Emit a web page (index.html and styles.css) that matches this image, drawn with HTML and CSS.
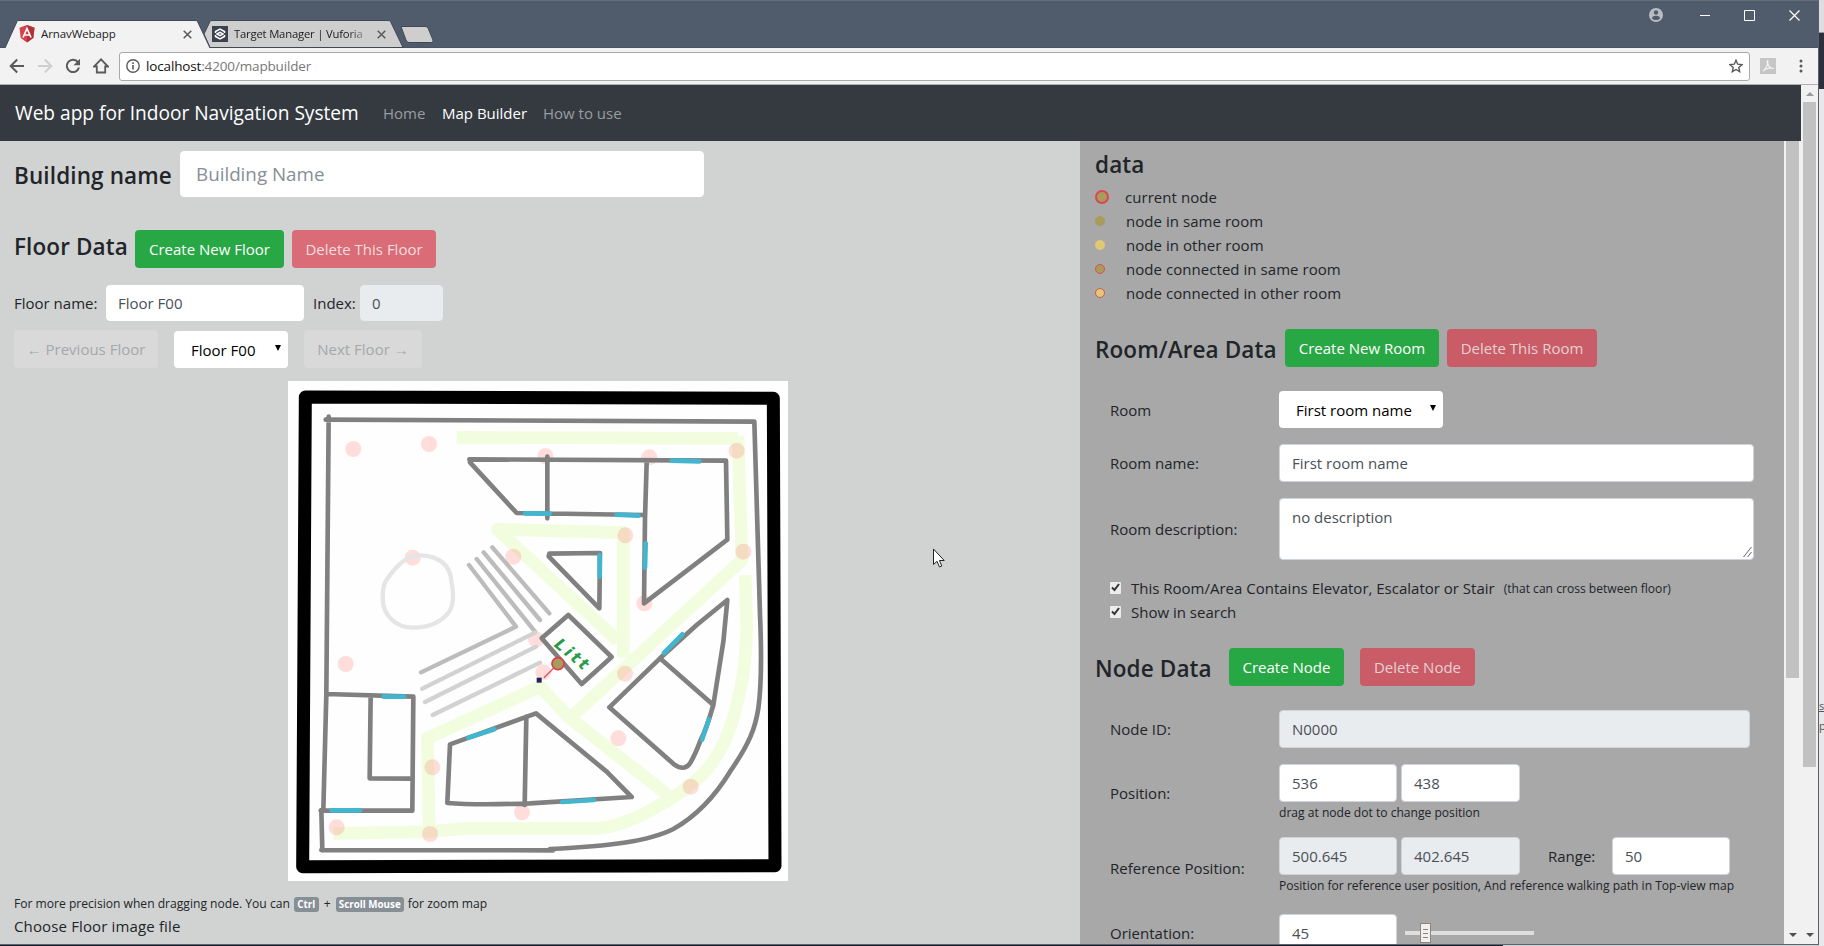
FILE: index.html
```html
<!DOCTYPE html>
<html lang="en">
<head>
<meta charset="utf-8">
<title>ArnavWebapp</title>
<link rel="stylesheet" href="styles.css">
</head>
<body>
<div class="desktop">
<div class="window">
  <div class="titlebar">
    <div class="tabs">
      <div class="tab tab-active">
        <svg class="tab-shape" width="206" height="28" viewBox="0 0 206 28"><path d="M0 28L12 1.500Q12.500 .5 14 .5H190Q192 .5 192.500 1.500L205 28" fill="#f2f2f2" stroke="#3f4854"/></svg>
        <div class="tab-row">
          <svg width="16" height="18" viewBox="0 0 16 18"><path d="M8 0L15.500 2.700 14.300 13 8 17.500 1.700 13 .5 2.700Z" fill="#d6414b"/><path d="M8 0L15.500 2.700 14.300 13 8 17.500Z" fill="#b13138"/><path d="M4 12.500L8 3.500 12 12.500M5.500 10H10.500" fill="none" stroke="#fff" stroke-width="1.700"/></svg>
          <span class="tab-title">ArnavWebapp</span>
          <svg class="close" width="9" height="9" viewBox="0 0 9 9"><path d="M.7.7L8.300 8.300M8.300.7L.7 8.300" stroke="#5a5a5a" stroke-width="1.500"/></svg>
        </div>
      </div>
      <div class="tab tab-second">
        <svg class="tab-shape" width="200" height="28" viewBox="0 0 200 28"><path d="M0 14L6 1.500Q6.500 .5 8 .5H184Q186 .5 186.500 1.500L199 27.500H6Z" fill="#cecece" stroke="#3f4854"/></svg>
        <div class="tab-row">
          <svg width="16" height="16" viewBox="0 0 16 16"><path d="M0 0H16V16H0Z" fill="#3b4250"/><path d="M3.500 7V5.500L8 3 12.500 5.500V7M3.500 9V10.500L8 13 12.500 10.500V9M5 8L8 6.300 11 8 8 9.700Z" fill="none" stroke="#fff" stroke-width="1.500"/></svg>
          <span class="tab-title faded">Target Manager | Vuforia</span>
          <svg class="close" width="9" height="9" viewBox="0 0 9 9"><path d="M.7.7L8.300 8.300M8.300.7L.7 8.300" stroke="#5a5a5a" stroke-width="1.500"/></svg>
        </div>
      </div>
      <svg class="new-tab" width="34" height="17" viewBox="0 0 34 17"><path d="M1 .5H25Q27 .5 28 2L33 14Q33.500 16 31.500 16.500H9Q7 16.500 6 14Z" fill="#cecece" stroke="#3f4854"/></svg>
    </div>
    <div class="controls">
      <svg width="14" height="14" viewBox="0 0 14 14"><circle cx="7" cy="7" r="7" fill="#b9bcc0"/><circle cx="7" cy="4.500" r="2.200" fill="#505c6b"/><path d="M3 10.500Q3 7.800 7 7.800T11 10.500Q9.500 12 7 12T3 10.500Z" fill="#505c6b"/></svg>
      <svg width="10" height="11" viewBox="0 0 10 11"><path d="M0 5.500H10" stroke="#fff"/></svg>
      <svg width="11" height="11" viewBox="0 0 11 11"><path d="M.5.5H10.500V10.500H.5Z" fill="none" stroke="#fff"/></svg>
      <svg width="11" height="11" viewBox="0 0 11 11"><path d="M.5.5L10.500 10.500M10.500.5L.5 10.500" stroke="#fff" stroke-width="1.200"/></svg>
    </div>
  </div>
  <div class="toolbar">
    <svg class="tool" width="16" height="16" viewBox="0 0 16 16"><path d="M15 8H2M8.200 1.500L1.700 8 8.200 14.500" fill="none" stroke="#5a5a5a" stroke-width="2"/></svg>
    <svg class="tool" width="16" height="16" viewBox="0 0 16 16"><path d="M1 8H14M7.800 1.500L14.300 8 7.800 14.500" fill="none" stroke="#cfcfcf" stroke-width="2"/></svg>
    <svg class="tool" width="16" height="16" viewBox="0 0 16 16"><path d="M13 4.200A6.200 6.200 0 1 0 14 9.500" fill="none" stroke="#5a5a5a" stroke-width="2"/><path d="M15 .8V7.300H8.500Z" fill="#5a5a5a"/></svg>
    <svg class="tool" width="16" height="16" viewBox="0 0 16 16"><path d="M8 1.300L1 8.500H3.800V14.500H12.200V8.500H15Z" fill="none" stroke="#5a5a5a" stroke-width="1.800"/></svg>
    <div class="omnibox">
      <svg width="14" height="14" viewBox="0 0 14 14"><circle cx="7" cy="7" r="6.200" fill="none" stroke="#5a5a5a" stroke-width="1.400"/><path d="M7 6V10.600M7 3.300V4.900" stroke="#5a5a5a" stroke-width="1.600"/></svg>
      <span class="url">localhost<span class="path">:4200/mapbuilder</span></span>
      <svg class="star" width="14" height="14" viewBox="0 0 14 14"><path d="M7 1.200L8.700 5.200 13 5.600 9.800 8.400 10.700 12.700 7 10.500 3.300 12.700 4.200 8.400 1 5.600 5.300 5.200Z" fill="none" stroke="#5a5a5a" stroke-width="1.400"/></svg>
    </div>
    <svg class="pdf" width="16" height="16" viewBox="0 0 16 16"><path d="M0 0H16V16H0Z" fill="#c6c6c6"/><path d="M3 13C5.500 11.500 8.500 6 8 3.200C7.700 2 6.800 2.700 7.200 4.500C8 7.500 10.500 10.500 13 10.500C12 9.300 6 9.800 3 13" fill="none" stroke="#f4f4f4" stroke-width="1.100"/></svg>
    <svg class="menu" width="4" height="14" viewBox="0 0 4 14"><circle cx="2" cy="2" r="1.500" fill="#5a5a5a"/><circle cx="2" cy="7" r="1.500" fill="#5a5a5a"/><circle cx="2" cy="12" r="1.500" fill="#5a5a5a"/></svg>
  </div>
  <div class="viewport">
    <div class="page">
      <nav class="navbar">
        <span class="brand">Web app for Indoor Navigation System</span>
        <span class="nav-link nav-home">Home</span>
        <span class="nav-link nav-map">Map Builder</span>
        <span class="nav-link nav-how">How to use</span>
      </nav>
      <div class="columns">
        <main class="left">
          <div class="row building">
            <h4 class="h-building">Building name</h4>
            <div class="input input-lg">Building Name</div>
          </div>
          <div class="row floor-head">
            <h4 class="h-floor">Floor Data</h4>
            <div class="btn success w149">Create New Floor</div>
            <div class="btn danger w144">Delete This Floor</div>
          </div>
          <div class="row floor-name">
            <span class="lbl lbl-floor">Floor name:</span>
            <div class="input in-floor">Floor F00</div>
            <span class="lbl lbl-index">Index:</span>
            <div class="input ro in-index">0</div>
          </div>
          <div class="row floor-nav">
            <div class="btn light w144">← Previous Floor</div>
            <div class="select sel-floor"><span>Floor F00</span><i class="caret"></i></div>
            <div class="btn light w118">Next Floor →</div>
          </div>
          <svg class="map" width="500" height="500" viewBox="0 0 1500 1500">
            <rect width="1500" height="1500" fill="#fefefe"/>
            <path class="border" d="M52 48L1456 52 1461 1454 44 1457Z"/>
            <g class="corridor">
              <path d="M506 169L1350 172M1350 165L1362 537 846 1012"/>
              <path d="M1006 830V455L628 445 990 780"/>
              <path d="M1372 582L1376 732Q1376 862 1346 972Q1306 1142 1206 1212Q1156 1252 1116 1272Q1036 1320 966 1337Q936 1342 906 1342L536 1342 426 1352 136 1357"/>
              <path d="M424 1345L418 1072 756 917 846 1012 1146 1247"/>
            </g>
            <g class="dots">
              <circle cx="196" cy="204" r="24"/><circle cx="423" cy="189" r="24"/><circle cx="374" cy="530" r="24"/><circle cx="676" cy="527" r="24"/><circle cx="772" cy="225" r="24"/><circle cx="1084" cy="229" r="24"/><circle cx="1346" cy="209" r="24"/><circle cx="1366" cy="512" r="24"/><circle cx="1012" cy="463" r="24"/><circle cx="1069" cy="667" r="24"/><circle cx="173" cy="849" r="24"/><circle cx="433" cy="1159" r="24"/><circle cx="146" cy="1339" r="24"/><circle cx="426" cy="1359" r="24"/><circle cx="702" cy="1294" r="24"/><circle cx="744" cy="775" r="24"/><circle cx="766" cy="874" r="24"/><circle cx="1011" cy="878" r="24"/><circle cx="991" cy="1072" r="24"/><circle cx="1208" cy="1217" r="24"/>
            </g>
            <path class="stairs" d="M613 499L784 697M587 514L756 717M566 534L741 752M543 552L684 737 399 874"/>
            <path class="stairs pale" d="M741 755L403 923M744 797L411 963M756 845L434 1002"/>
            <path class="pond" d="M401 523C375 522 345 535 320 565C290 600 284 610 284 650C284 705 325 740 375 740C420 740 460 725 485 690C500 665 496 630 490 600C487 550 450 526 401 523Z"/>
            <g class="wall">
              <path d="M122 107L115 940 106 1287M113 116L1399 122 1416 700Q1424 890 1411 982C1402 1040 1386 1085 1326 1172C1271 1262 1216 1310 1156 1344C1086 1380 966 1396 786 1404M796 1408L100 1407M103 1408L100 1287M98 1289H373L376 947 115 939M248 945L245 1192 371 1193"/>
              <path d="M544 235L1314 239 1318 476 1068 667 1071 412 1076 245M546 244L686 396 1071 402M778 227V412"/>
              <path d="M784 518L936 516 934 682 782 526Z"/>
              <path d="M841 702L971 828 881 909 761 772Z"/>
              <path d="M1318 657L1306 782 1276 972Q1256 1042 1236 1082Q1222 1120 1206 1147Q1190 1172 1158 1150L964 979 1116 832 1226 732ZM1116 832L1276 972"/>
              <path d="M486 1090L744 997 956 1172 1031 1248 726 1267Q566 1273 478 1266ZM715 1007L710 1272"/>
            </g>
            <path class="door" d="M711 397L786 398M986 401L1051 404M1151 239L1234 241M1073 487L1071 559M935 522V587M287 947H348M131 1288H216M1128 816L1183 760M1263 1015L1242 1076M541 1070L619 1045M823 1263L918 1257"/>
            <text class="lift" transform="translate(796 794) rotate(40)">Litt</text>
            <path d="M810 848L768 890" stroke="#e0555c" stroke-width="4"/>
            <circle cx="810" cy="848" r="18" fill="#a89c5c" stroke="#d8404c" stroke-width="5"/>
            <path d="M746 890H761V905H746Z" fill="#20245a"/>
          </svg>
          <div class="hint">
            <span>For more precision when dragging node. You can</span>
            <kbd class="k-ctrl">Ctrl</kbd><span>+</span><kbd class="k-scroll">Scroll Mouse</kbd>
            <span>for zoom map</span>
          </div>
          <div class="choose">Choose Floor image file</div>
        </main>
        <aside class="right">
          <h4 class="h-data">data</h4>
          <ul class="legend">
            <li><i class="dot current"></i>current node</li>
            <li><i class="dot same"></i>node in same room</li>
            <li><i class="dot other"></i>node in other room</li>
            <li><i class="dot same linked"></i>node connected in same room</li>
            <li><i class="dot other linked"></i>node connected in other room</li>
          </ul>
          <div class="row room-head">
            <h4 class="h-room">Room/Area Data</h4>
            <div class="btn success w154">Create New Room</div>
            <div class="btn danger w150">Delete This Room</div>
          </div>
          <div class="form">
            <span class="lbl">Room</span>
            <div class="select sel-room"><span>First room name</span><i class="caret"></i></div>
            <span class="lbl">Room name:</span>
            <div class="input">First room name</div>
            <span class="lbl">Room description:</span>
            <div class="input area">no description
              <svg class="grip" width="9" height="12" viewBox="0 0 9 12"><path d="M.5 11L8.500 1M4.500 11L8.500 6" stroke="#666" fill="none"/></svg>
            </div>
          </div>
          <div class="checks">
            <div class="check"><i class="box"><svg width="9" height="9" viewBox="0 0 9 9"><path d="M1 4.500L3.500 7 8 1" fill="none" stroke="#333" stroke-width="2"/></svg></i><span>This Room/Area Contains Elevator, Escalator or Stair</span><small>(that can cross between floor)</small></div>
            <div class="check"><i class="box"><svg width="9" height="9" viewBox="0 0 9 9"><path d="M1 4.500L3.500 7 8 1" fill="none" stroke="#333" stroke-width="2"/></svg></i><span>Show in search</span></div>
          </div>
          <div class="row node-head">
            <h4 class="h-node">Node Data</h4>
            <div class="btn success w115">Create Node</div>
            <div class="btn danger w115">Delete Node</div>
          </div>
          <div class="form node-form">
            <span class="lbl">Node ID:</span>
            <div class="input ro in-node">N0000</div>
            <span class="lbl">Position:</span>
            <div class="stack">
              <div class="fields"><div class="input num">536</div><div class="input num">438</div></div>
              <small>drag at node dot to change position</small>
            </div>
            <span class="lbl">Reference Position:</span>
            <div class="stack">
              <div class="fields"><div class="input num ro">500.645</div><div class="input num ro">402.645</div><span class="lbl range">Range:</span><div class="input num">50</div></div>
              <small class="ref-help">Position for reference user position, And reference walking path in Top-view map</small>
            </div>
            <span class="lbl">Orientation:</span>
            <div class="fields orient"><div class="input num">45</div><div class="slider"><div class="thumb"></div></div></div>
          </div>
        </aside>
        <div class="scroll inner"><div class="bar"></div><i class="arrow down"></i></div>
      </div>
    </div>
    <div class="scroll outer"><i class="arrow up"></i><div class="bar"></div><i class="arrow down"></i></div>
  </div>
</div>
<div class="behind">
  <div class="b-top"></div>
  <div class="b-dark"></div>
  <div class="b-rest"><span class="b-link">s</span><span>p</span></div>
</div>
<svg class="cursor" width="14" height="21" viewBox="0 0 14 21"><path d="M1.500 1V16.500L5 13.300 7.500 19 9.800 18 7.400 12.500H12.200Z" fill="#fff" stroke="#222"/></svg>
</div>
</body>
</html>
```
FILE: styles.css
```css
* { box-sizing: border-box; }
body { margin: 0; overflow: hidden; font: 15px/24px "Open Sans", "Noto Sans", sans-serif; color: #212529; }
svg { display: block; flex: none; }
.desktop { position: relative; width: 1824px; height: 946px; display: flex; background: linear-gradient(90deg, #1c1f2b 1503px, #cfd1d3 1503px); overflow: hidden; }
.window { width: 1819px; height: 945px; display: flex; flex-direction: column; border-right: 1px solid #566070; border-bottom: 1px solid #5c6470; }

.titlebar { height: 48px; background: #505c6b; border-top: 1px solid #666d76; border-bottom: 1px solid #4a5361; display: flex; justify-content: space-between; flex: none; }
.tabs { display: flex; padding: 19px 0 0 5px; }
.tab { display: grid; height: 28px; }
.tab > * { grid-area: 1 / 1; }
.tab-active { width: 206px; z-index: 1; }
.tab-second { width: 200px; margin-left: -7px; }
.tab-row { display: flex; align-items: center; height: 28px; }
.tab-active .tab-row { padding-left: 14px; }
.tab-second .tab-row { padding-left: 8px; }
.tab-title { font-size: 11.500px; letter-spacing: -.1px; width: 142px; margin-left: 6px; color: #222; white-space: nowrap; overflow: hidden; }
.faded { width: 134px; font-size: 11.300px; letter-spacing: -.2px; -webkit-mask-image: linear-gradient(90deg, #000 85%, rgba(0, 0, 0, .2)); mask-image: linear-gradient(90deg, #000 85%, rgba(0, 0, 0, .2)); }
.tab-second .close { margin-left: 9px; }
.new-tab { margin: 6px 0 0 -4px; }
.controls { display: flex; align-items: center; height: 28px; padding-right: 18px; }
.controls svg + svg { margin-left: 34px; }
.controls svg:nth-child(2) { margin-left: 37px; }

.toolbar { height: 37px; background: #f2f2f2; border-bottom: 1px solid #b0b0b0; display: flex; align-items: center; flex: none; padding-left: 9px; }
.tool { margin-right: 12px; }
.omnibox { width: 1631px; height: 29px; margin-left: -2px; background: #fff; border: 1px solid #a9a9a9; border-radius: 3px; display: flex; align-items: center; padding: 0 6px; }
.url { font-size: 13.500px; margin-left: 6px; letter-spacing: -.15px; color: #111; }
.path { color: #777; }
.star { margin-left: auto; }
.pdf { margin-left: 10px; }
.menu { margin-left: 23px; }

.viewport { flex: 1; display: flex; min-height: 0; }
.page { width: 1801px; display: flex; flex-direction: column; }
.navbar { height: 56px; flex: none; background: #343a40; display: flex; align-items: center; padding: 0 0 0 15px; color: #9a9da0; white-space: nowrap; }
.brand { width: 368px; font-size: 19.120px; color: #fff; }
.nav-home { width: 59px; }
.nav-map { width: 101px; color: #fff; }
.columns { flex: 1; min-height: 0; display: flex; overflow: hidden; }
.row { display: flex; }
h4 { margin: 0; font-size: 22.500px; line-height: 29px; font-weight: 600; white-space: nowrap; letter-spacing: .12px; }

.left { width: 1080px; flex: none; background: #d1d3d2; padding: 10px 0 0 14px; overflow: hidden; }
.building { height: 46px; align-items: center; }
.h-building { width: 166px; padding-top: 3px; }
.input { height: 38px; border: 1px solid #ced4da; border-radius: 4px; background: #fff; padding: 6px 12px; color: #495057; white-space: nowrap; overflow: hidden; }
.ro { background: #e9ecef; }
.left .input { border-color: #fff; }
.left .ro { border-color: #e9ecef; }
.input-lg { width: 524px; height: 46px; padding: 7px 15px; font-size: 18.800px; line-height: 30px; color: #868e96; }
.btn { height: 38px; border-radius: 4px; line-height: 38px; text-align: center; color: #fff; white-space: nowrap; }
.success { background: #28a745; }
.danger { background: #d96c77; color: #f3dcde; }
.right .danger { background: #c95c67; color: #e6d0d3; }
.light { background: #d9d9d9; color: #a6a8a9; }
.w115 { width: 115px; } .w118 { width: 118px; } .w144 { width: 144px; } .w149 { width: 149px; } .w150 { width: 150px; } .w154 { width: 154px; }
.floor-head { margin-top: 33px; height: 38px; }
.h-floor { width: 121px; padding-top: 2px; }
.floor-head .danger { margin-left: 8px; }
.floor-name { margin-top: 17px; height: 36px; align-items: center; }
.floor-name .input { height: 36px; padding: 5px 11px; }
.lbl { white-space: nowrap; }
.lbl-floor { width: 92px; }
.in-floor { width: 198px; }
.lbl-index { width: 56px; padding-left: 9px; }
.in-index { width: 83px; }
.floor-nav { margin-top: 9px; height: 38px; align-items: center; gap: 16px; }
.select { height: 37px; background: #fff; border-radius: 4px; display: flex; align-items: center; justify-content: space-between; padding: 1px 7px 0 17px; color: #000; white-space: nowrap; }
.sel-floor { width: 114px; }
.caret { border: 3.500px solid transparent; border-top: 6px solid #000; border-bottom: 0; margin-top: -4px; }
.map { margin: 13px 0 0 274px; }
.border { fill: none; stroke: #000; stroke-width: 39; stroke-linejoin: round; }
.corridor path { fill: none; stroke: #f2fddf; stroke-width: 38; stroke-linejoin: round; }
.dots circle { fill: rgba(255, 100, 90, .21); }
.stairs { fill: none; stroke: #bcbcbc; stroke-width: 13; stroke-linecap: round; stroke-linejoin: round; }
.pale { stroke: #d2d2d2; }
.pond { fill: none; stroke: #e5e5e5; stroke-width: 13; }
.wall path { fill: none; stroke: #808080; stroke-width: 14; stroke-linecap: round; stroke-linejoin: round; }
.door { fill: none; stroke: #42b5cf; stroke-width: 14; stroke-linecap: round; }
.lift { font: italic 700 48px "DejaVu Sans", sans-serif; fill: #2a9a4a; letter-spacing: 8px; }
.hint { display: flex; align-items: center; margin-top: 11px; height: 24px; font-size: 12.100px; white-space: nowrap; }
kbd { height: 15px; background: #868e96; color: #fff; border-radius: 3px; font: 700 9.800px/15px "Open Sans", sans-serif; text-align: center; }
.k-ctrl { width: 25px; margin: 0 5px 0 4px; }
.k-scroll { width: 68px; margin: 0 4px 0 5px; }
.choose { letter-spacing: .14px; margin-top: -2px; }

.right { width: 704px; flex: none; background: #a8a8a8; padding: 9px 0 0 15px; overflow: hidden; }
.legend { list-style: none; margin: 5px 0 0; padding: 0; }
.legend li { display: flex; align-items: center; height: 24px; letter-spacing: .05px; }
.h-data { line-height: 30px; }
.dot { width: 10px; height: 10px; border-radius: 50%; margin-right: 21px; margin-top: -1px; }
.current { width: 14px; height: 14px; margin-right: 16px; background: #a89c5c; border: 2px solid #dc4653; }
.same { background: #a89c5c; }
.other { background: #dfc975; }
.linked { border: 1px solid #d8505a; }
.room-head { margin-top: 24px; height: 38px; }
.h-room { width: 190px; padding-top: 6px; }
.room-head .danger { margin-left: 8px; }
.form { margin: 24px 0 0 15px; display: grid; grid-template-columns: 169px 475px; row-gap: 16px; align-items: center; }
.sel-room { width: 164px; }
.area { height: 62px; position: relative; }
.grip { position: absolute; right: 1px; bottom: 1px; }
.checks { margin: 16px 0 0 15px; }
.check { display: flex; align-items: center; height: 24px; white-space: nowrap; }
.box { width: 11px; height: 12px; margin: -1px 10px 0 0; background: #ececec; padding: 1px; border-radius: 1px; }
small { font-size: 12.080px; line-height: 22px; white-space: nowrap; display: block; }
.check small { margin: 2px 0 0 9px; }
.node-head { margin-top: 24px; height: 38px; }
.h-node { width: 134px; padding-top: 6px; }
.node-head .danger { margin-left: 16px; }
.in-node { width: 471px; }
.fields { display: flex; align-items: center; }
.num { width: 118px; }
.num + .num { margin-left: 4px; width: 119px; }
.range { padding: 0 16px 0 28px; width: 92px; }
.stack { height: 58px; }
.node-form { row-gap: 0; grid-template-rows: 54px 73px 77px 38px; align-items: start; }
.node-form > .lbl { padding-top: 17px; }
.node-form > .lbl:nth-child(1) { padding-top: 7px; }
.node-form > .lbl:nth-child(5) { padding-top: 19px; }
.node-form > .lbl:nth-child(7) { padding-top: 7px; }
.slider { width: 129px; height: 4px; background: #dedede; margin-left: 8px; display: flex; align-items: center; }
.thumb { width: 11px; height: 20px; margin-left: 15px; flex: none; background: #f1f0ee; border: 1px solid #8c867e; background-image: repeating-linear-gradient(#8c867e 0 1px, transparent 1px 4px); background-size: 5px 9px; background-position: center; background-repeat: no-repeat; }

.scroll { width: 17px; flex: none; background: #f1f1f1; position: relative; display: flex; flex-direction: column; align-items: center; padding-bottom: 7px; }
.scroll .bar { width: 13px; background: #c1c1c1; }
.inner .bar { height: 537px; }
.outer .bar { height: 665px; margin-top: 6px; }
.arrow { border: 4px solid transparent; }
.up { border-top: 0; border-bottom-color: #999; margin-top: 7px; }
.down { border-bottom: 0; border-top-color: #505050; margin-top: auto; }

.behind { width: 5px; display: flex; flex-direction: column; overflow: hidden; }
.b-top { height: 33px; background: #dedede; border-bottom: 1px solid #999; }
.b-dark { height: 56px; background: #2b303a; }
.b-rest { flex: 1; background: #e9e7e7; padding-top: 607px; font-size: 11px; line-height: 20px; display: flex; flex-direction: column; color: #555; }
.b-link { text-decoration: underline; }
.cursor { position: absolute; left: 932px; top: 548px; }
```
